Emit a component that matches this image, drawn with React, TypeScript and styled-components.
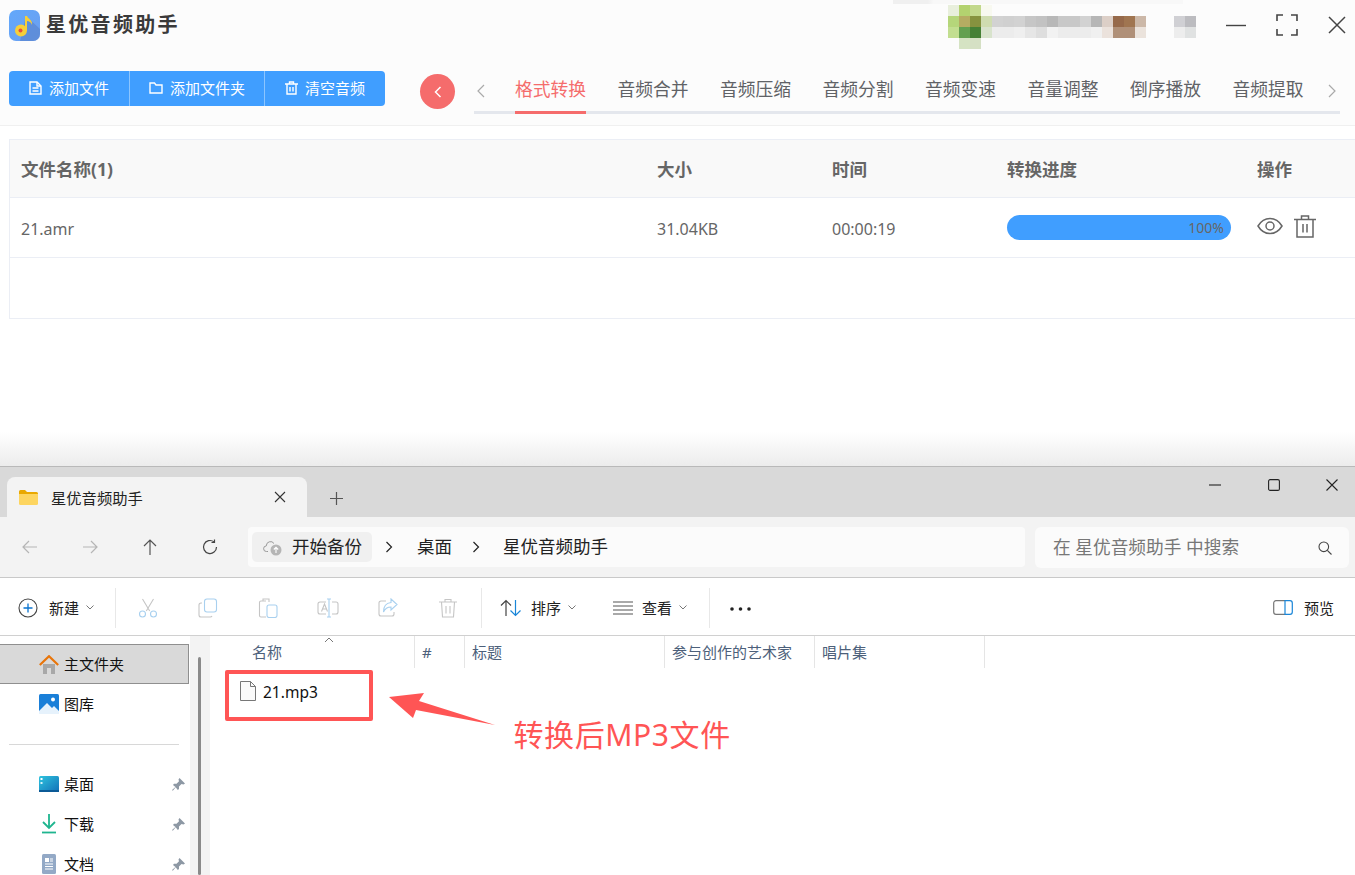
import React from "react";
import styled, { createGlobalStyle } from "styled-components";

const FONT = `"Noto Sans", "Noto Sans CJK SC", sans-serif`;

const GlobalStyle = createGlobalStyle`
  html, body {
    margin: 0;
    padding: 0;
    background: #fff;
    font-family: ${FONT};
    overflow: hidden;
  }
  * { box-sizing: border-box; }
`;

const TABS = ["格式转换", "音频合并", "音频压缩", "音频分割", "音频变速", "音量调整", "倒序播放", "音频提取"];

// pixelated account name in the title bar: [row, col, colour]
const MOSAIC_GRAYS = ["#d2d2d2", "#d0d0d0", "#d2d2d2", "#c6c6c6", "#c2c2c2", "#b8b8b8", "#c8c8c8", "#c8c8c8", "#d2d2d2", "#b6b6b6"];
const MOSAIC_LIGHT = ["#ececec", "#ececec", "#efefef", "#e6e6e6", "#dedede", "#f2f2f2", "#ececec", "#ececec", "#ececec", "#f0f0f0"];
const MOSAIC: [number, number, string][] = [
  [0, 0, "#e8efdc"], [0, 1, "#b3d26f"], [0, 2, "#c2d88c"], [0, 3, "#f8f9f0"],
  [1, 0, "#b5d67a"], [1, 1, "#b5ac62"], [1, 2, "#86923f"], [1, 3, "#cfdcb0"],
  [2, 0, "#c2de90"], [2, 1, "#63a050"], [2, 2, "#458035"], [2, 3, "#d8e3cc"],
  [3, 1, "#d5e3c3"], [3, 2, "#d5e0c4"],
  ...MOSAIC_GRAYS.map((c, i): [number, number, string] => [1, 4 + i, c]),
  ...MOSAIC_LIGHT.map((c, i): [number, number, string] => [2, 4 + i, c]),
  [1, 14, "#dccfc7"], [1, 15, "#96694a"], [1, 16, "#a07550"], [1, 17, "#ccb8a8"],
  [2, 14, "#ebe2dc"], [2, 15, "#b09078"], [2, 16, "#b09078"], [2, 17, "#ebe3dc"],
  [1, 20.5, "#d0d0d4"], [1, 21.5, "#bcbcc0"], [2, 20.5, "#ededed"], [2, 21.5, "#e0e2e2"],
];

const App: React.FC = () => (
  <Page>
    <GlobalStyle />
    <AudioApp>
      <Header>
        <TitleBar>
          <Logo viewBox="0 0 31 31">
            <defs>
              <linearGradient id="logoBg" x1="0" y1="0" x2="1" y2="1">
                <stop offset="0" stopColor="#62a8fb" />
                <stop offset="1" stopColor="#6c9ff0" />
              </linearGradient>
            </defs>
            <rect width="31" height="31" rx="7" fill="url(#logoBg)" />
            <path d="M17 6 L31 19 V24 a7 7 0 0 1 -7 7 H11 Z" fill="#5a86d0" opacity="0.7" />
            <path d="M16 6 h2 c1 3 6 4 5 9 c-1 -3 -3 -4 -5 -4 v10 h-2 Z" fill="#f6cf3a" />
            <circle cx="12" cy="20.5" r="6" fill="#f6cf3a" />
            <circle cx="11.5" cy="20.5" r="2" fill="#e8503a" />
          </Logo>
          <AppName>星优音频助手</AppName>
          <FadedLine />
          <Mosaic width="250" height="44" viewBox="0 0 250 44" shapeRendering="crispEdges">
            {MOSAIC.map(([row, col, color]) => (
              <rect key={`${row}-${col}`} x={col * 11} y={row * 11} width="11" height="11" fill={color} />
            ))}
          </Mosaic>
          <WindowControls>
            <svg width="20" height="20" viewBox="0 0 20 20" fill="none" stroke="#444" strokeWidth="1.4">
              <path d="M0 10.500h20" />
            </svg>
            <svg width="22" height="22" viewBox="0 0 22 22" fill="none" stroke="#444" strokeWidth="1.6">
              <path d="M1 7V1h6M15 1h6v6M21 15v6h-6M7 21H1v-6" />
            </svg>
            <svg width="18" height="18" viewBox="0 0 18 18" fill="none" stroke="#444" strokeWidth="1.5">
              <path d="M1 1l16 16M17 1L1 17" />
            </svg>
          </WindowControls>
        </TitleBar>
        <ActionBar>
          <ButtonGroup>
            <ActionButton $width={121}>
              <svg width="13" height="14" viewBox="0 0 13 14" fill="none" stroke="#fff" strokeWidth="1.4">
                <path d="M1 1h7l4 4v8H1z" />
                <path d="M3.500 7h6M3.500 10h6M8 1v4h4" />
              </svg>
              添加文件
            </ActionButton>
            <ActionButton $width={135}>
              <svg width="14" height="12" viewBox="0 0 14 12" fill="none" stroke="#fff" strokeWidth="1.4">
                <path d="M1 1h4.500l1.500 2h6v8H1z" />
              </svg>
              添加文件夹
            </ActionButton>
            <ActionButton $width={120}>
              <svg width="13" height="14" viewBox="0 0 13 14" fill="none" stroke="#fff" strokeWidth="1.4">
                <path d="M0 3h13M4.500 3V1h4v2M2 3v10h9V3M5 6v4.500M8 6v4.500" />
              </svg>
              清空音频
            </ActionButton>
          </ButtonGroup>
          <CollapseButton>
            <svg width="8" height="12" viewBox="0 0 8 12" fill="none" stroke="#fff" strokeWidth="1.5">
              <path d="M6.500 1L1.500 6l5 5" />
            </svg>
          </CollapseButton>
          <TabBar>
            <TabArrow $side="left">
              <svg width="8" height="14" viewBox="0 0 8 14" fill="none" stroke="#aaa" strokeWidth="1.2">
                <path d="M7 1L1 7l6 6" />
              </svg>
            </TabArrow>
            {TABS.map((tab, i) => (
              <TabItem key={tab} $active={i === 0}>{tab}</TabItem>
            ))}
            <TabArrow $side="right">
              <svg width="8" height="14" viewBox="0 0 8 14" fill="none" stroke="#aaa" strokeWidth="1.2">
                <path d="M1 1l6 6-6 6" />
              </svg>
            </TabArrow>
          </TabBar>
        </ActionBar>
      </Header>
      <TableArea>
        <FileTable>
          <HeaderRow>
            <HeadCell>文件名称(1)</HeadCell>
            <HeadCell>大小</HeadCell>
            <HeadCell>时间</HeadCell>
            <HeadCell>转换进度</HeadCell>
            <HeadCell>操作</HeadCell>
          </HeaderRow>
          <BodyRow>
            <BodyCell>21.amr</BodyCell>
            <BodyCell>31.04KB</BodyCell>
            <BodyCell>00:00:19</BodyCell>
            <GraphicCell>
              <ProgressBar>100%</ProgressBar>
            </GraphicCell>
            <GraphicCell>
              <RowIcons>
                <svg width="26" height="18" viewBox="0 0 26 18" fill="none" stroke="#666" strokeWidth="1.5">
                  <path d="M1 9c3-5 7-7.500 12-7.500S22 4 25 9c-3 5-7 7.500-12 7.500S4 14 1 9z" />
                  <circle cx="13" cy="9" r="4" />
                </svg>
                <svg width="22" height="23" viewBox="0 0 22 23" fill="none" stroke="#666" strokeWidth="1.5">
                  <path d="M0 4.500h22M7.500 4.500V1h7v3.500M3 4.500V22h16V4.500M9 9v8.500M13 9v8.500" />
                </svg>
              </RowIcons>
            </GraphicCell>
          </BodyRow>
          <EmptyRow />
        </FileTable>
      </TableArea>
    </AudioApp>

    <Explorer>
      <TabStrip>
        <ExplorerTab>
          <svg width="19" height="15" viewBox="0 0 19 15">
            <path d="M0 1.500A1.500 1.500 0 0 1 1.500 0H6l2 2h9.500A1.500 1.500 0 0 1 19 3.500V5H0z" fill="#e9a800" />
            <path d="M0 4h19v9.500a1.500 1.500 0 0 1-1.500 1.500h-16A1.500 1.500 0 0 1 0 13.500z" fill="#fdd560" />
          </svg>
          <ExplorerTabTitle>星优音频助手</ExplorerTabTitle>
          <svg width="12" height="12" viewBox="0 0 12 12" fill="none" stroke="#333" strokeWidth="1.1">
            <path d="M1 1l10 10M11 1L1 11" />
          </svg>
        </ExplorerTab>
        <NewTab>
          <svg width="13" height="13" viewBox="0 0 13 13" fill="none" stroke="#555" strokeWidth="1.2">
            <path d="M6.500 0v13M0 6.500h13" />
          </svg>
        </NewTab>
        <ExplorerControls>
          <svg width="12" height="12" viewBox="0 0 12 12" stroke="#222" strokeWidth="1.1">
            <path d="M0 6h12" />
          </svg>
          <svg width="12" height="12" viewBox="0 0 12 12" fill="none" stroke="#222" strokeWidth="1.1">
            <rect x="0.600" y="0.600" width="10.800" height="10.800" rx="1.500" />
          </svg>
          <svg width="12" height="12" viewBox="0 0 12 12" stroke="#222" strokeWidth="1.1">
            <path d="M0.500 0.500l11 11M11.500 0.500l-11 11" />
          </svg>
        </ExplorerControls>
      </TabStrip>

      <NavBar>
        <NavButtons>
          <NavButton>
            <svg width="16" height="14" viewBox="0 0 16 14" fill="none" stroke="#b5b5b5" strokeWidth="1.200">
              <path d="M15 7H1M7 1L1 7l6 6" />
            </svg>
          </NavButton>
          <NavButton>
            <svg width="16" height="14" viewBox="0 0 16 14" fill="none" stroke="#b5b5b5" strokeWidth="1.200">
              <path d="M1 7h14M9 1l6 6-6 6" />
            </svg>
          </NavButton>
          <NavButton>
            <svg width="14" height="16" viewBox="0 0 14 16" fill="none" stroke="#555" strokeWidth="1.200">
              <path d="M7 16V1M1 7l6-6 6 6" />
            </svg>
          </NavButton>
          <NavButton>
            <svg width="16" height="16" viewBox="0 0 16 16" fill="none" stroke="#444" strokeWidth="1.200">
              <path d="M14.500 8A6.500 6.500 0 1 1 12 2.900M12.500 0.500v3h-3" />
            </svg>
          </NavButton>
        </NavButtons>
        <AddressBar>
          <BackupPill>
            <svg width="19" height="17" viewBox="0 0 19 17">
              <path d="M5 12.500H3.500a2.800 2.800 0 0 1 -.2-5.600A4.200 4.200 0 0 1 11 4.500" fill="none" stroke="#999" strokeWidth="1" />
              <circle cx="13" cy="11" r="5.500" fill="#b5b5b5" />
              <path d="M13 14V8.500M10.800 10.500L13 8.300l2.200 2.200" fill="none" stroke="#fff" strokeWidth="1.100" />
            </svg>
            <NavText>开始备份</NavText>
          </BackupPill>
          <Crumb>
            <Chevron />
            <NavText>桌面</NavText>
          </Crumb>
          <Crumb>
            <Chevron />
            <NavText>星优音频助手</NavText>
          </Crumb>
        </AddressBar>
        <SearchBox>
          <NavText>在 星优音频助手 中搜索</NavText>
          <svg width="14" height="14" viewBox="0 0 14 14" fill="none" stroke="#444" strokeWidth="1.100">
            <circle cx="5.800" cy="5.800" r="4.800" />
            <path d="M9.300 9.300L13.500 13.500" />
          </svg>
        </SearchBox>
      </NavBar>

      <CommandBar>
        <CommandItem $width={97}>
          <svg width="20" height="20" viewBox="0 0 20 20" fill="none">
            <circle cx="10" cy="10" r="9" stroke="#444" strokeWidth="1.100" />
            <path d="M10 5.500v9M5.500 10h9" stroke="#0a74d0" strokeWidth="1.300" />
          </svg>
          <CommandLabel $gap={11}>新建</CommandLabel>
          <SmallCaret />
        </CommandItem>
        <CommandDivider $before={0} $after={2} />
        <DisabledIcon>
          <svg width="20" height="20" viewBox="0 0 20 20" fill="none" strokeWidth="1.100">
            <path d="M4.500 1l7.200 12M15.500 1L8.300 13" stroke="#c5c5c5" />
            <circle cx="4.500" cy="16" r="3" stroke="#a8d0ef" />
            <circle cx="15.500" cy="16" r="3" stroke="#a8d0ef" />
          </svg>
        </DisabledIcon>
        <DisabledIcon>
          <svg width="20" height="20" viewBox="0 0 20 20" fill="none" strokeWidth="1.100">
            <path d="M4 5H3a2 2 0 0 0-2 2v10a2 2 0 0 0 2 2h9a2 2 0 0 0 2-1" stroke="#c5c5c5" />
            <rect x="6.500" y="1" width="12" height="13" rx="2.500" stroke="#a8d0ef" />
          </svg>
        </DisabledIcon>
        <DisabledIcon>
          <svg width="20" height="20" viewBox="0 0 20 20" fill="none" strokeWidth="1.100">
            <path d="M8 3H3a1.500 1.500 0 0 0-1.500 1.500v13A1.500 1.500 0 0 0 3 19h5M5 3V1h6v3" stroke="#c5c5c5" />
            <rect x="9" y="7" width="10" height="12.500" rx="2" stroke="#a8d0ef" />
          </svg>
        </DisabledIcon>
        <DisabledIcon>
          <svg width="22" height="20" viewBox="0 0 22 20" fill="none" strokeWidth="1.100">
            <path d="M9 4H3a2 2 0 0 0-2 2v8a2 2 0 0 0 2 2h6M15 4h4a2 2 0 0 1 2 2v8a2 2 0 0 1-2 2h-4" stroke="#c5c5c5" />
            <path d="M4.500 13.500l3-7.500 3 7.500M5.500 11h4" stroke="#c5c5c5" />
            <path d="M10 1h4M12 1v18M10 19h4" stroke="#a8d0ef" />
          </svg>
        </DisabledIcon>
        <DisabledIcon>
          <svg width="20" height="20" viewBox="0 0 20 20" fill="none" strokeWidth="1.100">
            <path d="M8 3H3a2 2 0 0 0-2 2v11a2 2 0 0 0 2 2h11a2 2 0 0 0 2-2v-2" stroke="#c5c5c5" />
            <path d="M13 1l6 5.500L13 12V9C9 9 7 10.500 5.500 14c0-5 2.500-9 7.500-9.500z" stroke="#a8d0ef" />
          </svg>
        </DisabledIcon>
        <DisabledIcon>
          <svg width="18" height="20" viewBox="0 0 18 20" fill="none" stroke="#c5c5c5" strokeWidth="1.100">
            <path d="M0 4h18M6 4V1.500h6V4M2.500 4l1 15h11l1-15M7 8v7.500M11 8v7.500" />
          </svg>
        </DisabledIcon>
        <CommandDivider $before={3} $after={18} />
        <CommandItem $width={113}>
          <svg width="22" height="18" viewBox="0 0 22 18" fill="none" strokeWidth="1.200">
            <path d="M6 17V1.500M1 6.500l5-5 5 5" stroke="#444" />
            <path d="M15.500 1v15.500M10.500 11.500l5 5 5-5" stroke="#1a86d8" />
          </svg>
          <CommandLabel $gap={9}>排序</CommandLabel>
          <SmallCaret />
        </CommandItem>
        <CommandItem $width={96}>
          <svg width="20" height="14" viewBox="0 0 20 14" fill="none" stroke="#555" strokeWidth="1.100">
            <path d="M0 1h20M0 5h20M0 9h20M0 13h20" />
          </svg>
          <CommandLabel $gap={9}>查看</CommandLabel>
          <SmallCaret />
        </CommandItem>
        <CommandDivider $before={0} $after={0} />
        <MoreDots>
          <svg width="21" height="4" viewBox="0 0 21 4" fill="#222">
            <circle cx="2" cy="2" r="1.800" />
            <circle cx="10.500" cy="2" r="1.800" />
            <circle cx="19" cy="2" r="1.800" />
          </svg>
        </MoreDots>
        <PreviewToggle>
          <svg width="20" height="15" viewBox="0 0 20 15" fill="none" strokeWidth="1.200">
            <path d="M12 .7H3a2.300 2.300 0 0 0-2.300 2.300v9A2.300 2.300 0 0 0 3 14.300h9" stroke="#777" />
            <path d="M12 .7h5A2.300 2.300 0 0 1 19.300 3v9a2.300 2.300 0 0 1-2.300 2.300h-5z" stroke="#1a86d8" />
          </svg>
          <CommandLabel $gap={11}>预览</CommandLabel>
        </PreviewToggle>
      </CommandBar>

      <ExplorerBody>
        <Sidebar>
          <SideRow $selected>
            <svg width="20" height="19" viewBox="0 0 20 19">
              <path d="M4 9h12v10H12v-6H8v6H4z" fill="#a8a8a8" />
              <path d="M0.800 10L10 1.200 19.200 10" fill="none" stroke="#e8750a" strokeWidth="2.200" />
            </svg>
            <SideLabel>主文件夹</SideLabel>
          </SideRow>
          <SideRow>
            <svg width="20" height="20" viewBox="0 0 20 20">
              <rect width="20" height="20" rx="1.500" fill="#1a7fd8" />
              <path d="M0 17l8-8 5 5 2-2 5 5v3H0z" fill="#e6f2fc" />
              <circle cx="14" cy="5.500" r="2" fill="#fff" />
            </svg>
            <SideLabel>图库</SideLabel>
          </SideRow>
          <SideDivider />
          <SideRow>
            <svg width="20" height="16" viewBox="0 0 20 16">
              <defs>
                <linearGradient id="deskBg" x1="0" y1="0" x2="1" y2="1">
                  <stop offset="0" stopColor="#2fc4de" />
                  <stop offset="1" stopColor="#1270b8" />
                </linearGradient>
              </defs>
              <rect width="20" height="16" rx="1.500" fill="url(#deskBg)" />
              <rect x="1.500" y="2" width="2" height="2" fill="#fff" />
              <rect x="1.500" y="6" width="2" height="2" fill="#d8f4fa" />
              <rect y="14" width="20" height="2" fill="#0b5a96" />
            </svg>
            <SideLabel>桌面</SideLabel>
            <PinIcon />
          </SideRow>
          <SideRow>
            <svg width="20" height="20" viewBox="0 0 20 20" fill="none" stroke="#1fb58f" strokeWidth="1.800">
              <path d="M10 0v13M4 8l6 6 6-6" />
              <path d="M3 18.500h14" />
            </svg>
            <SideLabel>下载</SideLabel>
            <PinIcon />
          </SideRow>
          <SideRow>
            <svg width="20" height="20" viewBox="0 0 20 20">
              <rect x="3" y="0" width="14" height="20" rx="1.500" fill="#93a9c6" />
              <path d="M6 4h4v4H6z" fill="#fff" />
              <path d="M11 5h3M11 7h3M6 10h8M6 12.500h8M6 15h8" stroke="#fff" strokeWidth="1" />
            </svg>
            <SideLabel>文档</SideLabel>
            <PinIcon />
          </SideRow>
        </Sidebar>
        <ScrollRail>
          <ScrollThumb />
        </ScrollRail>
        <FileList>
          <SortCaret width="10" height="6" viewBox="0 0 10 6" fill="none" stroke="#777" strokeWidth="1">
            <path d="M1 5l4-4 4 4" />
          </SortCaret>
          <ColumnRow>
            <ColumnHead $width={205} $first>名称</ColumnHead>
            <ColumnHead $width={50}>#</ColumnHead>
            <ColumnHead $width={200}>标题</ColumnHead>
            <ColumnHead $width={150}>参与创作的艺术家</ColumnHead>
            <ColumnHead $width={170}>唱片集</ColumnHead>
          </ColumnRow>
          <HighlightBox>
            <svg width="16" height="20" viewBox="0 0 16 20" fill="#fafafa" stroke="#777" strokeWidth="1">
              <path d="M.5.500h10l5 5v14H.5z" />
              <path d="M10.500.500v5h5" fill="none" />
            </svg>
            <FileName>21.mp3</FileName>
          </HighlightBox>
          <AnnotationArrow width="110" height="38" viewBox="0 0 110 38">
            <path d="M1 9L36 5 31 13 107 37 28 22 25 30z" fill="#ff5555" />
          </AnnotationArrow>
          <AnnotationText>转换后MP3文件</AnnotationText>
        </FileList>
      </ExplorerBody>
    </Explorer>
  </Page>
);

export default App;

const Chevron: React.FC = () => (
  <svg width="8" height="12" viewBox="0 0 8 12" fill="none" stroke="#222" strokeWidth="1.200">
    <path d="M1.500 1l5 5-5 5" />
  </svg>
);

const SmallCaret: React.FC = () => (
  <svg width="8" height="5" viewBox="0 0 8 5" fill="none" stroke="#777" strokeWidth="1">
    <path d="M.5.500L4 4 7.500.500" />
  </svg>
);

const PinIcon: React.FC = () => (
  <PinWrap width="13" height="13" viewBox="0 0 13 13" fill="#8d98a4">
    <path d="M7.500 0L13 5.500 11.500 6.500 9.500 6 7 8.500 7 11 5.800 12 3.700 9.300 0.800 12.800 0 12 3.500 9.100 1 7 2 5.800H4.500L7 3.300 6.500 1.500z" />
  </PinWrap>
);

const Page = styled.div`
  width: 1355px;
  height: 875px;
  display: flex;
  flex-direction: column;
  overflow: hidden;
`;

const AudioApp = styled.div`
  height: 466px;
  background: #fff;
  display: flex;
  flex-direction: column;
  position: relative;

  &::after {
    content: "";
    position: absolute;
    left: 0;
    right: 0;
    bottom: 0;
    height: 34px;
    background: linear-gradient(to bottom, rgba(238, 238, 238, 0), #ececec);
  }
`;

const Header = styled.header`
  height: 126px;
  background: #fcfcfc;
  border-bottom: 1px solid #f0f0f0;
`;

const TitleBar = styled.div`
  height: 62px;
  padding: 10px 9px 0;
  display: flex;
  align-items: flex-start;
  position: relative;
`;

const Logo = styled.svg`
  width: 31px;
  height: 31px;
  flex: none;
`;

const AppName = styled.div`
  margin-left: 6px;
  font-size: 20px;
  line-height: 29px;
  font-weight: 700;
  letter-spacing: 2.300px;
  color: #3a3a3a;
`;

const FadedLine = styled.div`
  position: absolute;
  left: 893px;
  top: 0;
  width: 290px;
  height: 4px;
  background: linear-gradient(to right, #f0f0f0 0, #f0f0f0 12%, #f8f8f8 14%, #f8f8f8 100%);
`;

const Mosaic = styled.svg`
  margin-left: auto;
  margin-top: -5px;
  margin-right: 28px;
  flex: none;
`;

const WindowControls = styled.div`
  width: 120px;
  height: 30px;
  display: flex;
  align-items: center;
  justify-content: space-between;
`;

const ActionBar = styled.div`
  padding: 9px 0 0 9px;
  display: flex;
  align-items: flex-start;
`;

const ButtonGroup = styled.div`
  display: flex;
  background: #409eff;
  border-radius: 4px;
  overflow: hidden;
  height: 35px;
  flex: none;
`;

const ActionButton = styled.div<{ $width: number }>`
  width: ${(p) => p.$width}px;
  padding-bottom: 2px;
  display: flex;
  align-items: center;
  justify-content: center;
  gap: 7px;
  color: #fff;
  font-size: 15px;
  border-right: 1px solid #8cc5ff;

  &:last-child {
    border-right: 0;
  }
`;

const CollapseButton = styled.div`
  width: 35px;
  height: 35px;
  margin: 3px 0 0 35px;
  border-radius: 50%;
  background: #f56c6c;
  display: flex;
  align-items: center;
  justify-content: center;
  flex: none;
`;

const TabBar = styled.nav`
  width: 866px;
  height: 43px;
  margin-left: 19px;
  padding-left: 41px;
  border-bottom: 3px solid #e4e7ed;
  display: flex;
  gap: 31.500px;
  position: relative;
`;

const TabArrow = styled.span<{ $side: "left" | "right" }>`
  position: absolute;
  top: 13px;
  ${(p) => (p.$side === "left" ? "left: 3px;" : "right: 4px;")}
  line-height: 0;
`;

const TabItem = styled.div<{ $active: boolean }>`
  height: 43px;
  line-height: 37px;
  font-size: 17.750px;
  white-space: nowrap;
  color: ${(p) => (p.$active ? "#f56c6c" : "#606266")};
  border-bottom: 3px solid ${(p) => (p.$active ? "#f56c6c" : "transparent")};
`;

const TableArea = styled.div`
  flex: 1;
  padding: 13px 0 0 9px;
`;

const FileTable = styled.div`
  border: 1px solid #ebeef5;
  border-right: 0;
  border-bottom: 0;
`;

const COLUMNS = "635px 175px 175px 250px 1fr";

const HeaderRow = styled.div`
  display: grid;
  grid-template-columns: ${COLUMNS};
  height: 58px;
  align-items: center;
  background: #f9f9f9;
  border-bottom: 1px solid #ebeef5;
`;

const HeadCell = styled.div`
  padding-left: 11px;
  font-size: 17.500px;
  font-weight: 700;
  color: #666;

  & + & {
    padding-left: 12px;
  }
`;

const BodyRow = styled.div`
  display: grid;
  grid-template-columns: ${COLUMNS};
  height: 60px;
  align-items: center;
  border-bottom: 1px solid #ebeef5;
`;

const BodyCell = styled.div`
  padding: 2px 0 0 11px;
  font-size: 16px;
  color: #666;

  & + & {
    padding-left: 12px;
  }
`;

const GraphicCell = styled.div`
  padding-left: 12px;
`;

const ProgressBar = styled.div`
  width: 224px;
  height: 25px;
  margin-top: -1px;
  border-radius: 13px;
  background: #409eff;
  color: #666;
  font-size: 14px;
  line-height: 25px;
  text-align: right;
  padding-right: 7px;
`;

const RowIcons = styled.div`
  display: flex;
  align-items: center;
  gap: 11px;
  margin-top: -3px;
`;

const EmptyRow = styled.div`
  height: 61px;
  border-bottom: 1px solid #ebeef5;
`;

const Explorer = styled.section`
  height: 409px;
  border-top: 1px solid #b9b9b9;
  background: #fff;
  display: flex;
  flex-direction: column;
`;

const TabStrip = styled.div`
  height: 50px;
  flex: none;
  background: #d9d9d9;
  padding: 10px 0 0 7px;
  display: flex;
  align-items: flex-start;
`;

const ExplorerTab = styled.div`
  width: 300px;
  height: 40px;
  background: #f3f3f3;
  border-radius: 8px 8px 0 0;
  padding: 0 21px 0 12px;
  display: flex;
  align-items: center;
`;

const ExplorerTabTitle = styled.span`
  margin-left: 13px;
  flex: 1;
  font-size: 15.300px;
  color: #222;
`;

const NewTab = styled.div`
  margin: 15px 0 0 23px;
  line-height: 0;
`;

const ExplorerControls = styled.div`
  margin: 2px 17px 0 auto;
  width: 129px;
  display: flex;
  justify-content: space-between;
  line-height: 0;
`;

const NavBar = styled.div`
  height: 61px;
  flex: none;
  background: #f3f3f3;
  border-bottom: 1px solid #c9c9c9;
  padding: 10px 6px 0 0;
  display: flex;
  align-items: flex-start;
`;

const NavButtons = styled.div`
  width: 248px;
  height: 40px;
  display: flex;
  flex: none;
`;

const NavButton = styled.div`
  width: 60px;
  height: 40px;
  display: flex;
  align-items: center;
  justify-content: center;
`;

const NavText = styled.span`
  margin-top: -3px;
  white-space: nowrap;
`;

const AddressBar = styled.div`
  width: 777px;
  height: 40px;
  flex: none;
  background: #fbfbfb;
  border-radius: 4px;
  padding-left: 4px;
  display: flex;
  align-items: center;
  font-size: 17.500px;
  color: #222;
`;

const BackupPill = styled.div`
  width: 120px;
  height: 30px;
  background: #f0f0f0;
  border-radius: 5px;
  padding-left: 11px;
  display: flex;
  align-items: center;
  gap: 10px;
`;

const Crumb = styled.div`
  display: flex;
  align-items: center;
  gap: 24px;
  margin-left: 13px;

  & + & {
    margin-left: 20px;
  }

  & + & > span {
    margin-left: -1px;
  }
`;

const SearchBox = styled.div`
  width: 314px;
  height: 41px;
  flex: none;
  margin-left: 10px;
  background: #fbfbfb;
  border-radius: 6px;
  padding: 0 17px 0 18px;
  display: flex;
  align-items: center;
  justify-content: space-between;
  font-size: 17.700px;
  color: #777;
`;

const CommandBar = styled.div`
  height: 58px;
  flex: none;
  background: #fff;
  border-bottom: 1px solid #d0d0d0;
  padding: 2px 0 0 18px;
  display: flex;
  align-items: center;
`;

const CommandItem = styled.div<{ $width: number }>`
  width: ${(p) => p.$width}px;
  display: flex;
  align-items: center;
  flex: none;

  & > svg:last-child {
    margin-left: 7px;
  }
`;

const CommandLabel = styled.span<{ $gap: number }>`
  margin-left: ${(p) => p.$gap}px;
  margin-top: -1px;
  font-size: 15px;
  color: #222;
  white-space: nowrap;
`;

const CommandDivider = styled.div<{ $before: number; $after: number }>`
  width: 1px;
  height: 40px;
  margin: 0 ${(p) => p.$after}px 0 ${(p) => p.$before}px;
  background: #e8e8e8;
  flex: none;
`;

const DisabledIcon = styled.div`
  width: 60px;
  display: flex;
  justify-content: center;
  flex: none;
`;

const MoreDots = styled.div`
  margin-left: 20px;
  line-height: 0;
`;

const PreviewToggle = styled.div`
  margin-left: auto;
  margin-right: 21px;
  display: flex;
  align-items: center;
`;

const ExplorerBody = styled.div`
  flex: 1;
  display: flex;
  min-height: 0;
  overflow: hidden;
`;

const Sidebar = styled.aside`
  width: 190px;
  flex: none;
  padding-top: 8px;
  background: #fff;
`;

const SideRow = styled.div<{ $selected?: boolean }>`
  height: 40px;
  width: 189px;
  padding-left: 39px;
  display: flex;
  align-items: center;
  gap: 5px;
  font-size: 15px;
  color: #111;
  position: relative;
  background: ${(p) => (p.$selected ? "#d9d9d9" : "transparent")};
  border: 1px solid ${(p) => (p.$selected ? "#8f8f8f" : "transparent")};
  border-left: 0;
`;

const SideLabel = styled.span`
  margin-top: -2px;
`;

const PinWrap = styled.svg`
  position: absolute;
  right: 3px;
  top: 13px;
`;

const SideDivider = styled.div`
  height: 1px;
  margin: 20px 0 19px 9px;
  width: 170px;
  background: #d8d8d8;
`;

const ScrollRail = styled.div`
  width: 20px;
  flex: none;
  background: #f3f3f3;
  padding: 21px 0 0 8px;
`;

const ScrollThumb = styled.div`
  width: 3px;
  height: 100%;
  background: #8a8a8a;
  border-radius: 2px;
`;

const FileList = styled.main`
  flex: 1;
  position: relative;
`;

const SortCaret = styled.svg`
  position: absolute;
  left: 114px;
  top: 1px;
`;

const ColumnRow = styled.div`
  display: flex;
  height: 32px;
`;

const ColumnHead = styled.div<{ $width: number; $first?: boolean }>`
  width: ${(p) => p.$width}px;
  padding-left: ${(p) => (p.$first ? 42 : 7)}px;
  border-right: 1px solid #e5e5e5;
  font-size: 15px;
  line-height: 33px;
  color: #4c607a;
  white-space: nowrap;
`;

const HighlightBox = styled.div`
  width: 148px;
  height: 51px;
  margin: 2px 0 0 15px;
  border: 4px solid #ff5555;
  border-radius: 2px;
  padding: 7px 0 0 11px;
  display: flex;
  align-items: flex-start;
`;

const FileName = styled.span`
  margin: 1px 0 0 7px;
  font-size: 15.500px;
  line-height: 20px;
  color: #111;
`;

const AnnotationArrow = styled.svg`
  position: absolute;
  left: 178px;
  top: 52px;
`;

const AnnotationText = styled.div`
  position: absolute;
  left: 303.500px;
  top: 78px;
  font-size: 30px;
  line-height: 42px;
  letter-spacing: 0.600px;
  color: #ff5555;
  white-space: nowrap;
`;
